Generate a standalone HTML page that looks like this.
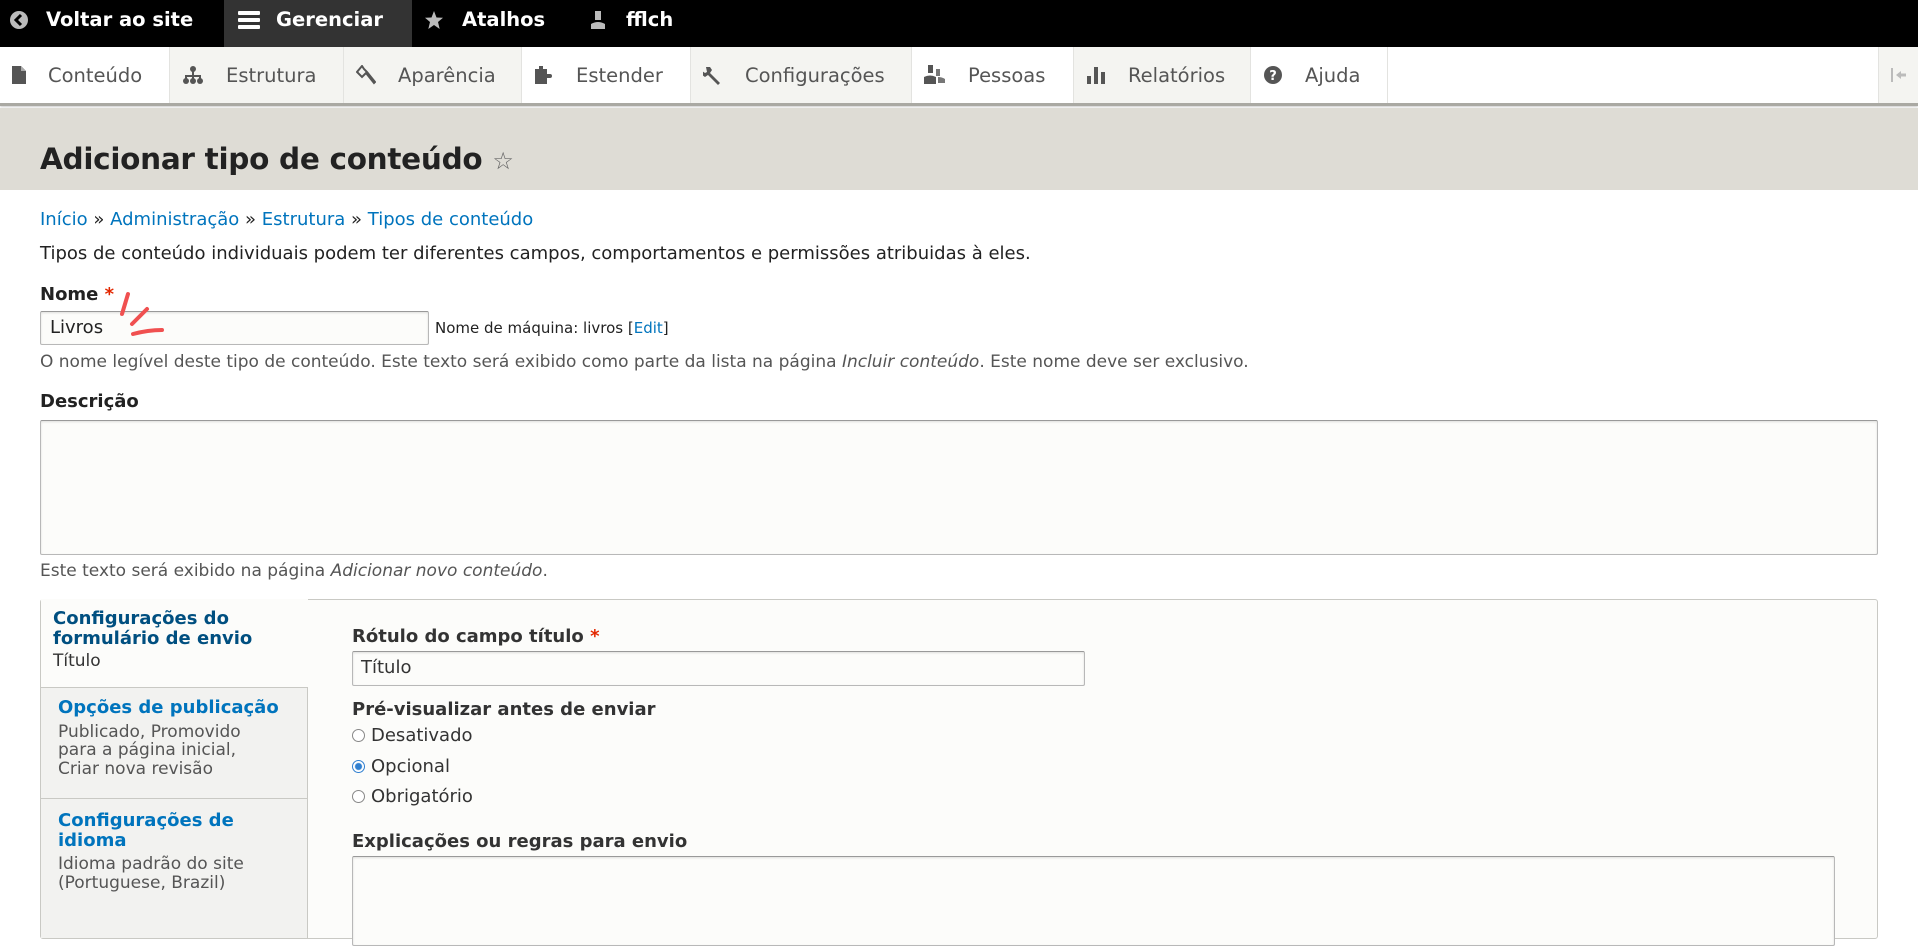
<!DOCTYPE html>
<html><head><meta charset="utf-8">
<style>
*{box-sizing:border-box;margin:0;padding:0}
body{width:1918px;height:907px;overflow:hidden;background:#fff;font-family:"DejaVu Sans","Liberation Sans",sans-serif;color:#222;position:relative}
.abs{position:absolute}
.bar{left:0;top:0;width:1918px;height:47px;background:#000}
.bar .it{position:absolute;top:0;height:47px;color:#fff;font-weight:bold;font-size:19.5px;display:flex;align-items:center;gap:14px;padding-bottom:8px}
.tray{left:0;top:47px;width:1918px;height:59px;background:#fff;border-bottom:3px solid #aaa9a3;box-shadow:0 1px 2px rgba(0,0,0,.2)}
.tray .t{position:absolute;top:0;height:56px;display:flex;align-items:center;font-size:19.5px;color:#555;border-right:1px solid #e3e3e0}
.tray .t svg{margin-left:12px;margin-right:22px}
.g{background:#f4f4f1}
.hdr{left:0;top:108px;width:1918px;height:82px;background:#dedcd5}
h1{position:absolute;left:40px;top:142px;font-size:29.5px;font-weight:bold;color:#222;letter-spacing:-0.3px}
a{color:#0074bd;text-decoration:none}
.txt{font-size:18px;color:#222;white-space:nowrap}
.lbl{font-weight:bold;font-size:18px;color:#222;white-space:nowrap}
.req{color:#e32700}
.desc{font-size:17px;color:#555;white-space:nowrap}
.inp{border:1px solid #b8b8b8;border-top-color:#999;border-radius:2px;background:#fcfcfa;box-shadow:inset 0 1px 2px rgba(0,0,0,.12)}
.vt{left:40px;top:599px;width:1838px;height:340px;border:1px solid #c9c9c4;border-radius:3px;background:#fcfcfa}
.tab{position:absolute;left:0;width:267px;background:#f2f2f0;border-top:1px solid #c9c9c4;border-right:1px solid #c9c9c4;padding:10px 14px 10px 17px}
.tab b{color:#0074bd;font-size:18px;display:block;line-height:19.5px}
.tab span{color:#555;font-size:17px;line-height:18.5px;display:block;margin-top:5px}
.radio{display:flex;align-items:center;font-size:18px;color:#333}
.rc{width:13px;height:13px;border:1px solid #888;border-radius:50%;margin-right:6px;background:#fff}
</style></head><body>
<div class="abs bar">
  <div class="it" style="left:10px"><svg width="18" height="18" viewBox="0 0 18 18"><circle cx="9" cy="9" r="9" fill="#bbb"/><path d="M11 4 L6 9 L11 14" stroke="#000" stroke-width="3" fill="none"/></svg><span style="margin-left:4px">Voltar ao site</span></div>
  <div class="it" style="left:224px;width:188px;background:#333;padding-left:14px;height:47px;gap:14px"><svg width="24" height="20" viewBox="0 0 24 20"><rect x="0" y="1" width="22" height="4" rx="1" fill="#fff"/><rect x="0" y="8" width="22" height="4" rx="1" fill="#fff"/><rect x="0" y="15" width="22" height="4" rx="1" fill="#fff"/></svg>Gerenciar</div>
  <div class="it" style="left:424px"><svg width="20" height="20" viewBox="0 0 20 20"><path d="M10 1 L12.5 7.5 L19 7.8 L14 12 L15.7 19 L10 15 L4.3 19 L6 12 L1 7.8 L7.5 7.5Z" fill="#bbb"/></svg><span style="margin-left:4px">Atalhos</span></div>
  <div class="it" style="left:588px"><svg width="20" height="22" viewBox="0 0 20 22"><path d="M7 2 h6 v9 h-6z M3 15 q7-4 14 0 v5 h-14z" fill="#bbb"/></svg><span style="margin-left:4px">fflch</span></div>
</div>
<div class="abs tray">
  <div class="t" style="left:0;width:170px"><svg width="14" height="18" viewBox="0 0 14 18"><path d="M0 0 h9 l5 5 v13 h-14z" fill="#555"/><path d="M9 0 v5 h5" fill="#aaa"/></svg>Conteúdo</div>
  <div class="t g" style="left:170px;width:174px"><svg width="22" height="18" viewBox="0 0 22 18"><circle cx="11" cy="3" r="3" fill="#555"/><path d="M10 5h2v5h-2z M3 9h16v2H3z M3 9h2v4H3z M17 9h2v4h-2z M10 9h2v4h-2z" fill="#555"/><circle cx="4" cy="15" r="3" fill="#555"/><circle cx="11" cy="15" r="3" fill="#555"/><circle cx="18" cy="15" r="3" fill="#555"/></svg>Estrutura</div>
  <div class="t g" style="left:344px;width:178px"><svg width="20" height="20" viewBox="0 0 20 20"><path d="M6 1 L1 7 L6 12 L10 8 L18 18 L19 17 L11 7 L8 4z" fill="none" stroke="#555" stroke-width="2"/></svg>Aparência</div>
  <div class="t" style="left:522px;width:169px"><svg width="20" height="20" viewBox="0 0 20 20"><path d="M1 4h4v-3h4v3h4v5h3a2 2 0 010 4h-3v6h-12z" fill="#555"/></svg>Estender</div>
  <div class="t g" style="left:691px;width:221px"><svg width="20" height="20" viewBox="0 0 20 20"><path d="M3 2 l4 0 l2 3 l-2 3 l10 10 l-2 2 l-10-10 l-3 2 l-3-2 l0-4 l3 2 l2-1z" fill="#555"/></svg>Configurações</div>
  <div class="t" style="left:912px;width:162px"><svg width="22" height="22" viewBox="0 0 22 22"><path d="M4 1h5v8h-5z M0 13q6-3 12 0v7h-12z" fill="#555"/><path d="M12 5h4v7h-4z M14 13q4 0 7 2v4h-7z" fill="#777"/></svg>Pessoas</div>
  <div class="t g" style="left:1074px;width:177px"><svg width="20" height="20" viewBox="0 0 20 20"><path d="M1 11h4v8h-4z M8 2h4v17h-4z M15 7h4v12h-4z" fill="#555"/></svg>Relatórios</div>
  <div class="t" style="left:1251px;width:137px"><svg width="20" height="20" viewBox="0 0 20 20"><circle cx="10" cy="10" r="9" fill="#555"/><text x="10" y="15" font-size="13" font-weight="bold" fill="#fff" text-anchor="middle" font-family="DejaVu Sans">?</text></svg>Ajuda</div>
  <div class="t g" style="left:1878px;width:40px;border-left:1px solid #e3e3e0;border-right:none;justify-content:center"><svg width="16" height="14" viewBox="0 0 16 14" style="margin:0"><rect x="0" y="0" width="2" height="14" fill="#bbb"/><path d="M5 7 L10 3 V5.5 H15 V8.5 H10 V11Z" fill="#bbb"/></svg></div>
</div>
<div class="abs hdr"></div>
<h1>Adicionar tipo de conteúdo <span style="font-weight:normal;font-size:24px;color:#666">☆</span></h1>

<div class="abs txt" style="left:40px;top:209px"><a>Início</a> » <a>Administração</a> » <a>Estrutura</a> » <a>Tipos de conteúdo</a></div>
<div class="abs txt" style="left:40px;top:243px">Tipos de conteúdo individuais podem ter diferentes campos, comportamentos e permissões atribuidas à eles.</div>
<div class="abs lbl" style="left:40px;top:284px">Nome <span class="req">*</span></div>
<div class="abs inp" style="left:40px;top:311px;width:389px;height:34px;font-size:18px;padding:5px 9px">Livros</div>
<div class="abs" style="left:435px;top:319px;font-size:15px;color:#222">Nome de máquina: livros [<a>Edit</a>]</div>
<svg class="abs" style="left:100px;top:290px" width="80" height="50" viewBox="0 0 80 50"><path d="M28 4 L22 24" stroke="#f05050" stroke-width="4" stroke-linecap="round"/><path d="M47 19 L32 34" stroke="#f05050" stroke-width="4" stroke-linecap="round"/><path d="M33 44 Q48 40 62 40" stroke="#f05050" stroke-width="4" stroke-linecap="round" fill="none"/></svg>
<div class="abs desc" style="left:40px;top:352px">O nome legível deste tipo de conteúdo. Este texto será exibido como parte da lista na página <i>Incluir conteúdo</i>. Este nome deve ser exclusivo.</div>
<div class="abs lbl" style="left:40px;top:391px">Descrição</div>
<div class="abs inp" style="left:40px;top:420px;width:1838px;height:135px"></div>
<div class="abs desc" style="left:40px;top:561px">Este texto será exibido na página <i>Adicionar novo conteúdo</i>.</div>

<div class="abs vt">
  <div class="tab" style="top:-1px;height:89px;background:#fcfcfa;border-right:none;border-top:none;padding:10px 12px"><b style="color:#004f80">Configurações do formulário de envio</b><span style="color:#333;margin-top:4px">Título</span></div>
  <div class="tab" style="top:87px;height:111px;padding-right:40px"><b style="white-space:nowrap">Opções de publicação</b><span>Publicado, Promovido para a página inicial, Criar nova revisão</span></div>
  <div class="tab" style="top:198px;height:140px;padding-top:12px"><b>Configurações de idioma</b><span>Idioma padrão do site (Portuguese, Brazil)</span></div>
  <div class="abs lbl" style="left:311px;top:26px;color:#333">Rótulo do campo título <span class="req">*</span></div>
  <div class="abs inp" style="left:311px;top:51px;width:733px;height:35px;font-size:18px;padding:5px 8px;color:#333">Título</div>
  <div class="abs lbl" style="left:311px;top:99px;color:#333">Pré-visualizar antes de enviar</div>
  <div class="abs radio" style="left:311px;top:125px"><span class="rc"></span>Desativado</div>
  <div class="abs radio" style="left:311px;top:156px"><span class="rc" style="border-color:#2f7fd0;background:radial-gradient(circle,#2f7fd0 3px,#fff 4px)"></span>Opcional</div>
  <div class="abs radio" style="left:311px;top:186px"><span class="rc"></span>Obrigatório</div>
  <div class="abs lbl" style="left:311px;top:231px;color:#333">Explicações ou regras para envio</div>
  <div class="abs inp" style="left:311px;top:256px;width:1483px;height:90px"></div>
</div>
</body></html>
